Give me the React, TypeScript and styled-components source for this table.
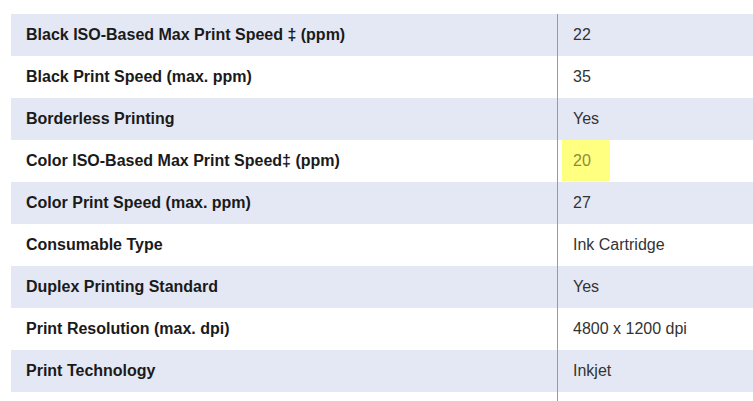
import React from 'react';
import styled, { createGlobalStyle } from 'styled-components';

interface specProps {
  label: string;
  value: string;
  highlight?: boolean;
}

const specs: specProps[] = [
  { label: 'Black ISO-Based Max Print Speed ‡ (ppm)', value: '22' },
  { label: 'Black Print Speed (max. ppm)', value: '35' },
  { label: 'Borderless Printing', value: 'Yes' },
  { label: 'Color ISO-Based Max Print Speed‡ (ppm)', value: '20', highlight: true },
  { label: 'Color Print Speed (max. ppm)', value: '27' },
  { label: 'Consumable Type', value: 'Ink Cartridge' },
  { label: 'Duplex Printing Standard', value: 'Yes' },
  { label: 'Print Resolution (max. dpi)', value: '4800 x 1200 dpi' },
  { label: 'Print Technology', value: 'Inkjet' },
  { label: '', value: '' },
];

function App() {
  return (
    <>
      <GlobalStyle />
      <S.Page>
        <S.Table>
          {specs.map((spec, i) => (
            <S.Row key={i} $striped={i % 2 === 0}>
              <S.Label>{spec.label}</S.Label>
              <S.Value>
                {spec.highlight ? <S.Highlight>{spec.value}</S.Highlight> : spec.value}
              </S.Value>
            </S.Row>
          ))}
        </S.Table>
      </S.Page>
    </>
  );
}

const GlobalStyle = createGlobalStyle`
  html, body {
    margin: 0;
    padding: 0;
    background: #ffffff;
    overflow: hidden;
  }
`;

const S = {
  Page: styled.div`
    padding: 14px 0 0 11px;
    width: 753px;
    height: 401px;
    box-sizing: border-box;
    overflow: hidden;
    font-family: 'Liberation Sans', Arial, sans-serif;
  `,
  Table: styled.div`
    display: flex;
    flex-direction: column;
    width: 760px;
  `,
  Row: styled.div<{ $striped: boolean }>`
    display: grid;
    grid-template-columns: 546px 1fr;
    height: 42px;
    background-color: ${(p) => (p.$striped ? '#e4e8f4' : '#ffffff')};
  `,
  Label: styled.div`
    display: flex;
    align-items: center;
    padding-left: 15px;
    font-size: 16px;
    font-weight: 700;
    color: #1a1a1a;
  `,
  Value: styled.div`
    display: flex;
    align-items: center;
    padding-left: 15px;
    border-left: 1px solid #9a9a9a;
    font-size: 16px;
    color: #333333;
  `,
  Highlight: styled.span`
    display: inline-flex;
    align-items: center;
    height: 41px;
    margin: -1px 0 0 -11px;
    padding: 0 19px 0 11px;
    background-color: #ffff80;
    color: #8c8c3a;
  `,
};

export default App;
